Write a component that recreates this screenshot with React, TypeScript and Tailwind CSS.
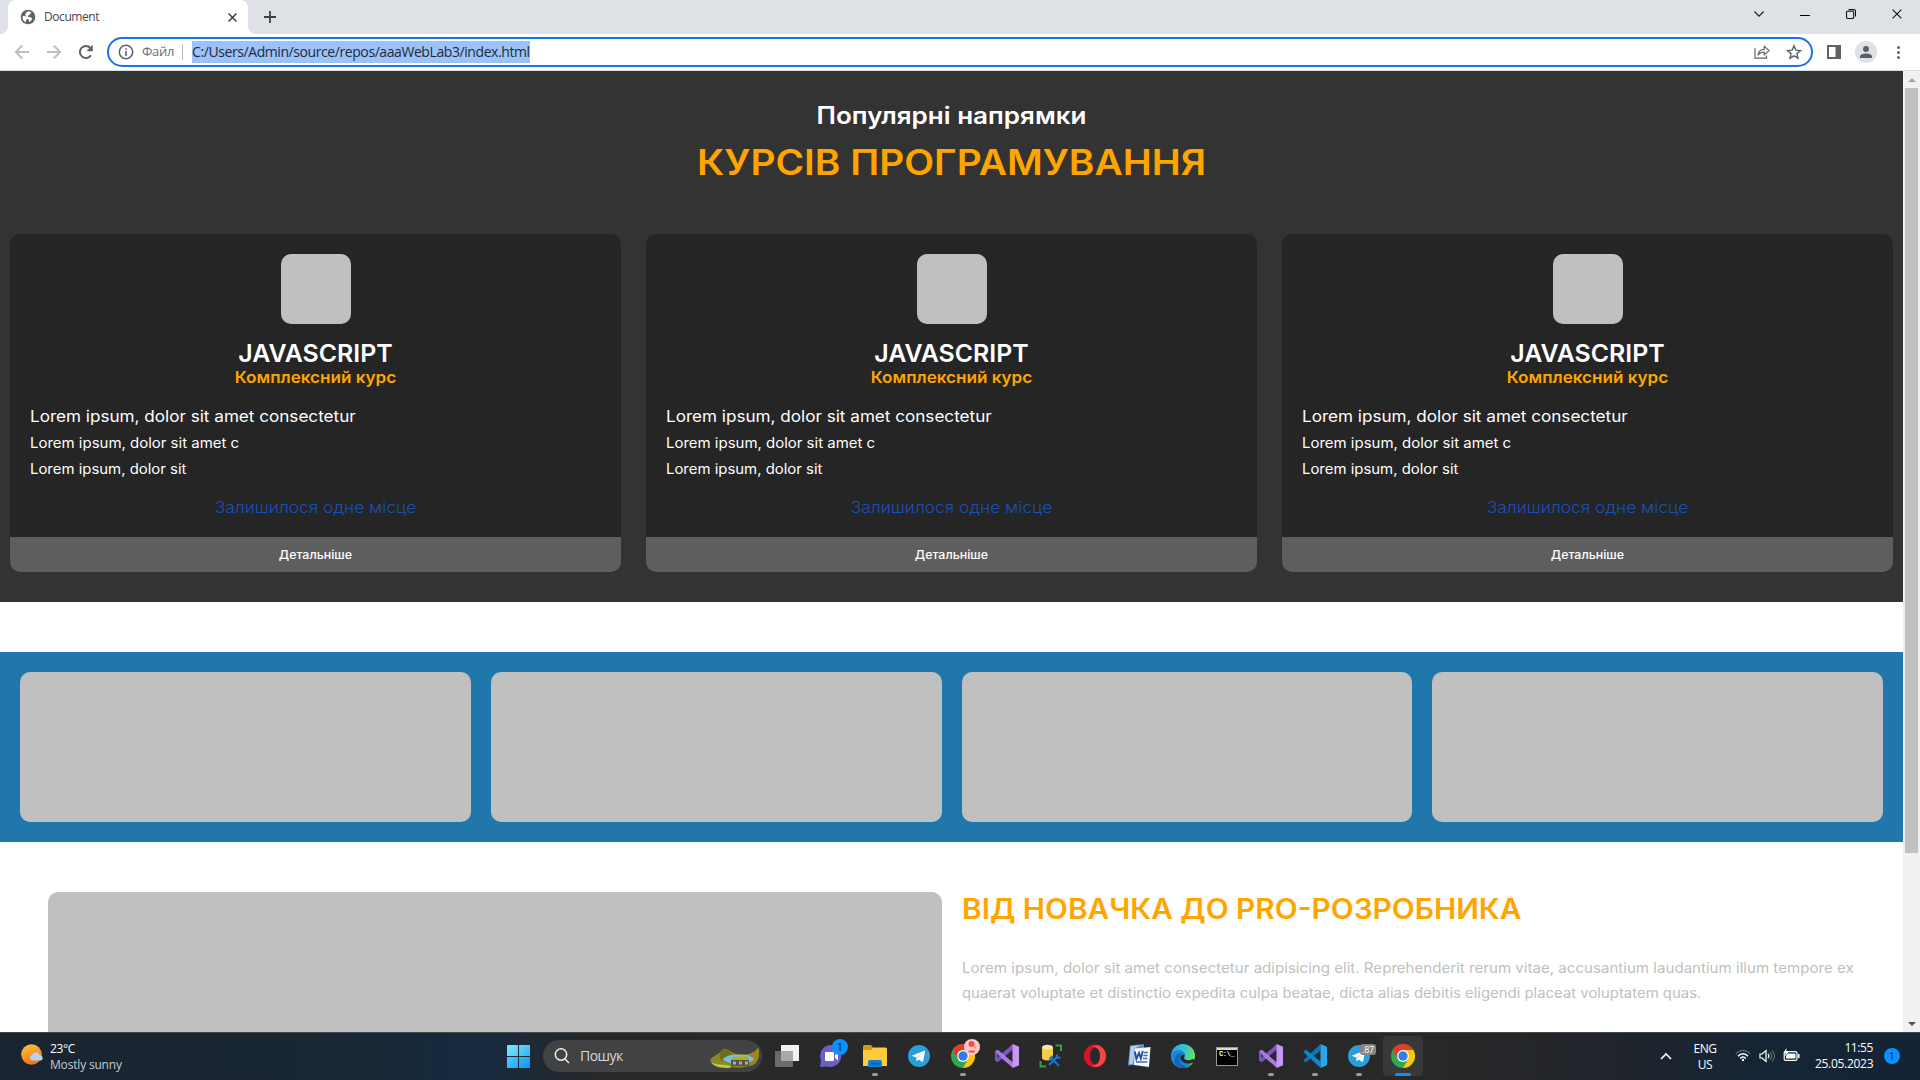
import React from "react";

/* ---------- browser icons ---------- */

const Globe = () => (
  <svg width="16" height="16" viewBox="0 0 16 16">
    <circle cx="8" cy="8" r="7.3" fill="#5f6368" />
    <path d="M2.600 7.200C4 6.800 5 7.600 6.600 8.200 8 8.800 7.600 10 6.600 10.600 5.800 11 6.400 12.200 5.600 13.200 3.600 12.200 2.200 10 2.600 7.200ZM7.400 2.600c1.600-.5 3 0 4 .9-.2 1-1.400 1-1.600 1.800-.3 1.200-1.500.7-2 1.600-.5.8.6 1.200 1.800 1.100 1.600-.1 1.400 1.300 2.600 1.300-.4 2.200-1.800 3.300-3.300 3.900.5-1.300-.2-1.900-.5-2.700-.4-1-2.200-.8-2.600-2.100-.4-1.200.3-1.800-.5-2.500C5.400 5.500 5.400 4.200 7.400 2.600Z" fill="#fff" />
  </svg>
);

const Cross = ({ size, color, w }: { size: number; color: string; w: number }) => (
  <svg width={size} height={size} viewBox="0 0 10 10" stroke={color} strokeWidth={w} fill="none">
    <path d="M.6.6 9.400 9.400M9.400.6.6 9.400" />
  </svg>
);

const Arrow = ({ flip }: { flip?: boolean }) => (
  <svg width="16" height="16" viewBox="0 0 16 16" className={flip ? "rotate-180" : ""} fill="none" stroke="#bcbec0" strokeWidth="1.9">
    <path d="M15 8H2.500M8.300 1.500 1.800 8l6.500 6.500" />
  </svg>
);

const Reload = () => (
  <svg width="16" height="16" viewBox="0 0 16 16">
    <path d="M13 11.200A6 6 0 1 1 12.400 4" fill="none" stroke="#5f6368" strokeWidth="2" />
    <path d="M14.800.8v6.400H8.400Z" fill="#5f6368" />
  </svg>
);

const Info = () => (
  <svg width="16" height="16" viewBox="0 0 16 16">
    <circle cx="8" cy="8" r="6.700" fill="none" stroke="#5f6368" strokeWidth="1.500" />
    <path d="M7.200 7h1.600v5H7.200zM7.200 4.200h1.600v1.600H7.200z" fill="#5f6368" />
  </svg>
);

const Share = () => (
  <svg width="16" height="16" viewBox="0 0 16 16" fill="none" stroke="#5f6368" strokeWidth="1.200">
    <path d="M1 4.200v10h11.500v-2.600" />
    <path d="M4 11c.4-3.600 2.500-5.600 6.200-5.700V2.300l4.900 4.300-4.900 4.300V8C7.400 8 5.600 9 4 11Z" strokeLinejoin="round" />
  </svg>
);

const Star = () => (
  <svg width="16" height="16" viewBox="0 0 16 16" fill="none" stroke="#5f6368" strokeWidth="1.400">
    <path d="m8 1.800 1.800 4.300 4.700.4-3.600 3.100 1.100 4.600L8 11.800l-4 2.400 1.100-4.600-3.600-3.100 4.700-.4Z" />
  </svg>
);

/* ---------- taskbar icons ---------- */

const Chrome = () => (
  <svg width="24" height="24" viewBox="0 0 24 24">
    <circle cx="12" cy="12" r="12" fill="#2da94f" />
    <path d="M12 24A12 12 0 0 0 22.400 6H12l5.200 9Z" fill="#fdc60b" />
    <path d="M1.600 6A12 12 0 0 1 22.400 6H12A6 6 0 0 0 6.800 15Z" fill="#e33b2e" />
    <circle cx="12" cy="12" r="5.900" fill="#fff" />
    <circle cx="12" cy="12" r="4.700" fill="#2f7de9" />
  </svg>
);

const VisualStudio = () => (
  <svg width="24" height="24" viewBox="0 0 24 24">
    <path d="M0 7.200v9.600l2.800 1.400L18 5.500V0L6.300 10 2.600 14V10L0 7.200Z" fill="#7d53bd" />
    <path d="M0 7.200 2.800 5.800 18 18.500V24L6.300 14 2.600 10Z" fill="#a77be2" />
    <path d="M17.500 0 24 2.800v18.400L17.500 24Z" fill="#c596f5" />
  </svg>
);

const VSCode = () => (
  <svg width="24" height="24" viewBox="0 0 24 24">
    <path d="M.5 16.200 17.500 0v6.500L3 18.300.5 17Z" fill="#0c76bd" />
    <path d="M.5 7.500 3 5.700 17.500 17.500V24L.5 8Z" fill="#0c86cf" />
    <path d="M17.500 0 24 2.800v18.400L17.500 24Z" fill="#29a5ee" />
  </svg>
);

const Telegram = () => (
  <svg width="22" height="22" viewBox="0 0 22 22">
    <circle cx="11" cy="11" r="11" fill="#2a9fd8" />
    <path d="M3.800 10.700 16.300 5.700c.6-.2 1 .1.8.9l-2 9.600c-.1.700-.6.8-1.200.5l-3.100-2.300-1.600 1.500c-.4.300-.7.100-.7-.3l-.3-3Z" fill="#fff" />
    <path d="m8.200 12.600 6-4.300-4.800 5.300-.9 2.300Z" fill="#b9d9ec" />
  </svg>
);

const TaskView = () => (
  <svg width="24" height="22" viewBox="0 0 24 22">
    <rect x="6" width="18" height="16" fill="#f1f1f1" />
    <rect y="6" width="18" height="16" fill="#6b6b6b" />
    <rect x="6" y="6" width="12" height="10" fill="#a9a9a9" />
  </svg>
);

const Chat = () => (
  <svg width="24" height="24" viewBox="0 0 24 24">
    <path d="M12 1a11 11 0 1 1-4 21.500L1 23l1-6.500A11 11 0 0 1 12 1Z" fill="#6a5fc8" />
    <rect x="6" y="8" width="9" height="9" rx="1" fill="#fff" />
    <path d="m16 11 3-2.500v8L16 14Z" fill="#fff" />
  </svg>
);

const Folder = () => (
  <svg width="24" height="22" viewBox="0 0 24 22">
    <path d="M0 1.500A1.500 1.500 0 0 1 1.500 0H8l2 2.500V8H0Z" fill="#d9980f" />
    <path d="M0 5h8l2.500-2.500h12A1.500 1.500 0 0 1 24 4v17H0Z" fill="#fdcb3c" />
    <path d="M5 22v-5a2 2 0 0 1 2-2h10a2 2 0 0 1 2 2v5Z" fill="#127cce" />
    <path d="M8 18h8v1.500H8z" fill="#0a5ba4" />
  </svg>
);

const Ssms = () => (
  <svg width="24" height="24" viewBox="0 0 24 24">
    <path d="M16.500 1.500h5.500V7M1.500 17v5.500H7" fill="none" stroke="#3f9b45" strokeWidth="2" />
    <path d="M3 3v11c0 1.500 2.500 2.500 5.500 2.500S14 15.500 14 14V3Z" fill="#f6c94a" />
    <ellipse cx="8.500" cy="3.200" rx="5.500" ry="2.400" fill="#fbe9b0" />
    <path d="m10 21 9-9M12 13.500l8 8.500" stroke="#1e72c4" strokeWidth="2.200" />
    <path d="M18 10.500v3.200h3.500M10.500 15.500l3-3.500" stroke="#1e72c4" strokeWidth="2" fill="none" />
  </svg>
);

const Opera = () => (
  <svg width="24" height="24" viewBox="0 0 24 24">
    <ellipse cx="12" cy="12" rx="11.200" ry="11.400" fill="#d9122b" />
    <path d="M15 1.200A11.300 11.300 0 0 1 15 22.800 9 9 0 0 1 8.500 21c6 1 8-4 8-9s-2-10-8-9A9 9 0 0 1 15 1.200Z" fill="#f3474a" />
    <ellipse cx="12" cy="12" rx="5" ry="8.600" fill="#2a2a2a" />
  </svg>
);

const Word = () => (
  <svg width="24" height="24" viewBox="0 0 24 24">
    <path d="M3 1.500 17 0v20L1 21.500Z" fill="#5f8bcd" />
    <path d="M3.500 2.200 14 1 8 4 6 19.500l-4 1Z" fill="#b9cdea" />
    <path d="M8 4.500 23.500 3 22 23 7 21Z" fill="#f7f9fd" />
    <path d="m7.800 7.500 1.600 7.500L12 9l1.800 5.500 2-7.500" fill="none" stroke="#1f4fa0" strokeWidth="1.900" />
    <path d="M16.800 8.500h4M16.300 11.500h4.300M16 14.500h4.300M9 18h11.300" stroke="#3f6cb5" strokeWidth="1.300" />
  </svg>
);

const Edge = () => (
  <svg width="24" height="24" viewBox="0 0 24 24">
    <defs>
      <linearGradient id="edgeTop" x1="0" y1="0" x2="1" y2=".4">
        <stop offset="0" stopColor="#2aa7e6" />
        <stop offset=".55" stopColor="#35c1d8" />
        <stop offset="1" stopColor="#6be05a" />
      </linearGradient>
    </defs>
    <circle cx="12" cy="12" r="12" fill="url(#edgeTop)" />
    <path d="M.2 11C1 7 5 5.500 8.500 6c4 .6 6.200 3.500 5.500 6-.4 1.300-1 1.500-.7 2.500.6 1.600 3.500 2.600 8.700.8C20.500 20.500 16.500 24 12 24 5 24-.5 18 .2 11Z" fill="#1b86dc" />
    <path d="M8.500 12.500c-1.500 5 2.500 9.500 7.800 10.600C9 26 2.500 21 3.500 15.500 4.200 11.500 8 9 11.500 9c-1.500.8-2.500 2-3 3.500Z" fill="#1565b8" />
    <path d="M13.700 11c.5 1.300-1 2-.5 3.500.7 1.900 4.800 2.700 9 .6l2 1.900-1.200 1.300C17 21 10 19 9.300 14c-.2-2 1.500-4 4.400-3Z" fill="#2a2a2a" />
  </svg>
);

const Cmd = () => (
  <div className="flex h-[19px] w-[22px] flex-col border border-[#9a9a9a] bg-black">
    <div className="h-0.5 bg-[#d8d8d8]" />
    <div className="pl-0.5 font-['Liberation_Mono'] text-[7px] leading-[8px] font-bold tracking-[-0.4px] text-white">C:\_</div>
  </div>
);

const Landscape = () => (
  <svg width="50" height="21" viewBox="0 0 50 21">
    <path d="M0 14C1 9 9 8 12 3c4-4 8 3 15 4 8 1 15 1 21-6 2 6 1 12-3 16-8 5-34 5-45-3Z" fill="#8a8a28" />
    <path d="M12 3c4-3 8 3 11 4-4 3-9 3-11 7-3-1-3-8 0-11Z" fill="#6f6a1c" />
    <path d="M48 .5c2 6 1 12-3 15l-7-3c-1-4 6-4 10-12Z" fill="#a2831f" />
    <path d="M13 12c3-4 11-5 18-4 6-1 11 1 13 4-2 5-24 8-31 0Z" fill="#6fc3e6" />
    <path d="M1 15c8 4 14 2 20 4l-1 2C11 21 3 20 1 15Z" fill="#c3c83a" />
    <path d="m23 10 14-1 3 4H20Z" fill="#b7ac24" />
    <path d="M21 13h18v6H21z" fill="#55544c" />
    <path d="M23 14.500h3v3h-3zM29 14.500h3v3h-3zM35 14.500h3v3h-3z" fill="#a9a8b8" />
  </svg>
);

const Weather = () => (
  <svg width="24" height="22" viewBox="0 0 24 22">
    <defs>
      <linearGradient id="sun" x1=".2" y1="0" x2=".6" y2="1">
        <stop offset="0" stopColor="#fbc23a" />
        <stop offset="1" stopColor="#f0701a" />
      </linearGradient>
    </defs>
    <circle cx="10.500" cy="10.500" r="10.300" fill="url(#sun)" />
    <path d="M11 16.500a3 3 0 0 1 .3-5.800 4 4 0 0 1 7.500.6A2.700 2.700 0 0 1 20 16.500Z" fill="#b9d1f7" />
  </svg>
);

/* ---------- taskbar ---------- */

type Task = { id: string; icon: React.ReactNode; running?: boolean; active?: boolean; badge?: React.ReactNode };

const tasks: Task[] = [
  { id: "view", icon: <TaskView /> },
  {
    id: "chat",
    icon: <Chat />,
    badge: (
      <div className="absolute top-1.5 left-[23px] flex size-4 items-center justify-center rounded-full bg-[#0a90ff] font-['Open_Sans'] text-[11px] text-[#10283e]">1</div>
    ),
  },
  { id: "files", icon: <Folder />, running: true },
  { id: "telegram", icon: <Telegram /> },
  {
    id: "chrome-profile",
    icon: <Chrome />,
    running: true,
    badge: (
      <svg className="absolute top-1.5 left-[23px]" width="16" height="16" viewBox="0 0 16 16">
        <circle cx="8" cy="8" r="8" fill="#fbc9cc" />
        <circle cx="7.500" cy="5" r="3" fill="#ef4b54" />
        <path d="m9.500 6 3.500 3.500-2.500.3Z" fill="#f08a3c" />
        <rect x="4.500" y="11.500" width="6.500" height="2" rx="1" fill="#ef4b54" />
      </svg>
    ),
  },
  { id: "vs", icon: <VisualStudio /> },
  { id: "ssms", icon: <Ssms /> },
  { id: "opera", icon: <Opera /> },
  { id: "word", icon: <Word /> },
  { id: "edge", icon: <Edge /> },
  { id: "cmd", icon: <Cmd /> },
  { id: "vs-open", icon: <VisualStudio />, running: true },
  { id: "vscode", icon: <VSCode />, running: true },
  {
    id: "telegram-open",
    icon: <Telegram />,
    running: true,
    badge: (
      <div className="absolute top-[11px] left-[23px] flex h-[11px] w-4 items-center justify-center rounded-[3px] bg-[#858585] font-['Open_Sans'] text-[9px] tracking-[-0.3px] text-white">.87</div>
    ),
  },
  { id: "chrome", icon: <Chrome />, running: true, active: true },
];

const Taskbar = () => (
  <footer className="flex h-12 shrink-0 border-t border-[#45484b] bg-[linear-gradient(90deg,#1a2430_0%,#182733_18%,#162a40_25%,#272829_31%,#292929_50%,#282828_75%,#20242b_84%,#152535_92%,#142434_100%)] font-['Open_Sans',sans-serif] text-xs text-white">
    <div className="flex w-[507px] gap-[5px] pt-[11px] pl-[21px]">
      <Weather />
      <div className="-mt-[3px]">
        <div className="h-4 leading-4 tracking-[-0.4px]">23°C</div>
        <div className="h-4 leading-4 tracking-[-0.18px] text-[#c5cad0]">Mostly sunny</div>
      </div>
    </div>
    <div className="mt-3 grid size-[23px] grid-cols-2 gap-px">
      <div className="rounded-tl-[1px] bg-linear-to-br from-[#7deafc] to-[#4ecbfa]" />
      <div className="bg-linear-to-br from-[#5ed6fb] to-[#2fb4f8]" />
      <div className="bg-linear-to-br from-[#4dcdfa] to-[#24a8f6]" />
      <div className="bg-linear-to-br from-[#36b8f9] to-[#1191f2]" />
    </div>
    <div className="mt-[7px] ml-[13px] flex h-8 w-[219px] items-center rounded-full bg-[#414243] pr-0.5 pl-[11px]">
      <svg width="16" height="16" viewBox="0 0 16 16" fill="none" stroke="#f0f0f0" strokeWidth="1.500">
        <circle cx="7" cy="6.500" r="5.700" />
        <path d="m11 11 4 4" />
      </svg>
      <span className="pl-[10px] text-sm tracking-[-0.55px] text-[#d8d8d8]">Пошук</span>
      <div className="mt-0.5 ml-auto">
        <Landscape />
      </div>
    </div>
    <div className="ml-[3px] flex">
      {tasks.map((t) => (
        <div key={t.id} className="relative flex h-[47px] w-11 flex-col items-center pt-[3px]">
          <div className={t.active ? "flex h-10 w-10 items-center justify-center rounded bg-[#383838]" : "flex h-10 w-10 items-center justify-center"}>
            {t.icon}
          </div>
          {t.badge}
          {t.running && (
            <div className={t.active ? "z-10 -mt-[3px] h-[3px] w-4 rounded-full bg-[#0a90ff]" : "-mt-[3px] h-[3px] w-1.5 rounded-full bg-[#9a9a9a]"} />
          )}
        </div>
      ))}
    </div>
    <div className="flex flex-1 items-start justify-end pr-5">
      <svg className="mt-[19px]" width="12" height="8" viewBox="0 0 12 8" fill="none" stroke="#fff" strokeWidth="1.600">
        <path d="m1 7 5-5 5 5" />
      </svg>
      <div className="mt-[8px] ml-[21px] w-[24px] text-center leading-4 tracking-[-0.5px]">
        <div>ENG</div>
        <div>US</div>
      </div>
      <svg className="mt-4 ml-[18px]" width="16" height="13" viewBox="0 0 16 13" fill="none" stroke="#fff" strokeWidth="1.500">
        <path d="M.8 5C4.500.3 11.500.3 15.200 5" stroke="#59636e" />
        <path d="M3 7.200c2.800-3.300 7.200-3.300 10 0M5.200 9.400c1.600-1.800 4-1.800 5.600 0" />
        <circle cx="8" cy="11" r="1.200" fill="#fff" stroke="none" />
      </svg>
      <svg className="mt-4 ml-2" width="16" height="14" viewBox="0 0 16 14" fill="none" stroke="#fff" strokeWidth="1.200">
        <path d="M1 5h2.200L7 1.500v11L3.200 9H1Z" />
        <path d="M9 4.800c1 1.300 1 3.100 0 4.400" />
        <path d="M11 3c2 2.400 2 5.600 0 8M13 1.200c3 3.600 3 8 0 11.600" stroke="#59636e" />
      </svg>
      <svg className="mt-[15px] ml-2" width="17" height="14" viewBox="0 0 17 14">
        <rect x="1.200" y="3.600" width="12.800" height="8.800" rx="1.500" fill="none" stroke="#fff" strokeWidth="1.200" />
        <path d="M4.500 5.500h8v5H3V8ZM15 6h1.500v4H15zM3.500 0 .5 5h2L1.800 8.500 5.500 3.800H3.300Z" fill="#fff" />
      </svg>
      <div className="mt-[7px] ml-[15px] w-[58px] text-right leading-4">
        <div className="tracking-[-0.4px]">11:55</div>
        <div className="tracking-[-0.3px]">25.05.2023</div>
      </div>
      <div className="mt-[15px] ml-[11px] flex size-4 items-center justify-center rounded-full bg-[#0a90ff] text-[11px] text-[#10283e]">1</div>
    </div>
  </footer>
);

/* ---------- browser chrome ---------- */

const BrowserBar = () => (
  <header className="flex h-[71px] shrink-0 flex-col border-b border-[#dadce0] bg-white font-['Open_Sans',sans-serif]">
    <div className="flex h-[34px] items-stretch bg-[#dee1e6]">
      <div className="flex w-2 items-end bg-white">
        <div className="h-full w-2 rounded-br-lg bg-[#dee1e6]" />
      </div>
      <div className="flex w-60 items-center rounded-t-lg bg-white pr-[11px] pl-3">
        <Globe />
        <span className="ml-2 text-xs tracking-[-0.42px] text-[#45494d]">Document</span>
        <div className="ml-auto">
          <Cross size={9} color="#3c4043" w={1.7} />
        </div>
      </div>
      <div className="bg-white">
        <div className="h-full w-2 rounded-bl-lg bg-[#dee1e6]" />
      </div>
      <div className="flex items-center pl-2">
        <svg width="12" height="12" viewBox="0 0 12 12" stroke="#3c4043" strokeWidth="1.800">
          <path d="M6 0v12M0 6h12" />
        </svg>
      </div>
      <div className="ml-auto flex items-center gap-9 pr-[18px] pb-[6px]">
        <svg width="10" height="6" viewBox="0 0 10 6" fill="none" stroke="#222" strokeWidth="1.200">
          <path d="m.4.5 4.600 4.600L9.600.5" />
        </svg>
        <div className="mt-[2px] h-px w-[10px] bg-black" />
        <svg width="10" height="10" viewBox="0 0 10 10" fill="none" stroke="#111" strokeWidth="1.100">
          <rect x=".5" y="2.300" width="7.200" height="7.200" rx="1.300" />
          <path d="M2.500.6H8A1.500 1.500 0 0 1 9.500 2v5.500" />
        </svg>
        <Cross size={10} color="#111" w={1.1} />
      </div>
    </div>
    <div className="flex flex-1 items-center pl-[14px]">
      <Arrow />
      <div className="ml-4 flex">
        <Arrow flip />
      </div>
      <div className="ml-4 flex">
        <Reload />
      </div>
      <div className="ml-[13px] flex h-[30px] w-[1706px] items-center rounded-full border-2 border-[#1a73e8] bg-white pr-[9px] pl-[9px]">
        <Info />
        <span className="ml-2 text-[13px] tracking-[-0.3px] text-[#6a6e73]">Файл</span>
        <div className="ml-2 h-4 w-px bg-[#b4b7bb]" />
        <span className="ml-[9px] h-[22px] bg-[#9cc2f7] text-sm leading-[22px] tracking-[-0.42px] text-[#202b3a]">C:/Users/Admin/source/repos/aaaWebLab3/index.html</span>
        <div className="ml-auto flex gap-4">
          <Share />
          <Star />
        </div>
      </div>
      <svg className="ml-[14px]" width="14" height="14" viewBox="0 0 14 14">
        <path d="M0 0h14v14H0zM2 2v10h6.500V2Z" fill="#5f6368" fillRule="evenodd" />
      </svg>
      <div className="ml-[14px] flex size-[22px] items-center justify-center rounded-full bg-[#dee1e6]">
        <svg width="12" height="12" viewBox="0 0 12 12" fill="#55606f">
          <circle cx="6" cy="3" r="3" />
          <path d="M0 12v-1.500C0 8.500 3 7.500 6 7.500s6 1 6 3V12Z" />
        </svg>
      </div>
      <div className="ml-5 flex flex-col gap-[2px]">
        <div className="size-[3px] rounded-full bg-[#5f6368]" />
        <div className="size-[3px] rounded-full bg-[#5f6368]" />
        <div className="size-[3px] rounded-full bg-[#5f6368]" />
      </div>
    </div>
  </header>
);

const Scrollbar = () => (
  <div className="flex w-[17px] flex-col items-center bg-[#f1f1f1]">
    <div className="flex h-[17px] items-center justify-center">
      <svg width="8" height="4" viewBox="0 0 8 4">
        <path d="M0 4 4 0l4 4Z" fill="#a3a3a3" />
      </svg>
    </div>
    <div className="h-[765px] w-[13px] bg-[#c1c1c1]" />
    <div className="mt-auto flex h-[17px] items-center justify-center">
      <svg width="8" height="4" viewBox="0 0 8 4">
        <path d="m0 0 4 4 4-4Z" fill="#505050" />
      </svg>
    </div>
  </div>
);

/* ---------- page ---------- */

const CourseCard = () => (
  <article className="flex h-[338px] flex-col overflow-hidden rounded-[10px] bg-[#252525] text-white">
    <div className="flex flex-1 flex-col px-5 pt-5">
      <div className="size-[70px] self-center rounded-[10px] bg-[#c0c0c0]" />
      <h3 className="mt-[15px] h-[29px] scale-x-[1.037] text-center text-2xl leading-[29px] font-semibold">JAVASCRIPT</h3>
      <h4 className="h-[18px] scale-x-[1.068] text-center text-base leading-[18px] font-semibold text-[#ffa500]">Комплексний курс</h4>
      <p className="mt-5 h-5 origin-left scale-x-[1.069] text-base leading-5">Lorem ipsum, dolor sit amet consectetur</p>
      <p className="mt-2 h-[18px] origin-left scale-x-[1.069] text-sm leading-[18px]">Lorem ipsum, dolor sit amet c</p>
      <p className="mt-2 h-[18px] origin-left scale-x-[1.065] text-sm leading-[18px]">Lorem ipsum, dolor sit</p>
      <p className="mt-[19px] h-5 scale-x-[1.085] text-center text-base leading-5 font-light text-[#1b50b4]">Залишилося одне місце</p>
    </div>
    <div className="h-[35px] bg-[#5e5e5e] text-center text-xs leading-[35px] font-medium">
      <span className="inline-block scale-x-[1.035]">Детальніше</span>
    </div>
  </article>
);

const Page = () => (
  <main className="h-full flex-1 overflow-hidden bg-white font-['Inter',sans-serif]">
    <section className="h-[531px] bg-[#333333] px-2.5 pt-[30px]">
      <h2 className="h-[30px] scale-x-[1.085] text-center text-2xl leading-[30px] font-semibold text-white">Популярні напрямки</h2>
      <h1 className="mt-[9px] h-[44px] scale-x-[1.11] text-center text-[35px] leading-[44px] font-semibold text-[#ffa500]">КУРСІВ ПРОГРАМУВАННЯ</h1>
      <div className="mt-[50px] grid grid-cols-3 gap-[25px]">
        <CourseCard />
        <CourseCard />
        <CourseCard />
      </div>
    </section>
    <section className="mt-[50px] grid h-[190px] grid-cols-4 gap-5 bg-[#2077ab] p-5">
      {[0, 1, 2, 3].map((i) => (
        <div key={i} className="rounded-[10px] bg-[#c0c0c0]" />
      ))}
    </section>
    <section className="mt-[50px] flex gap-5 pl-12">
      <div className="h-[300px] w-[894px] shrink-0 rounded-[10px] bg-[#c0c0c0]" />
      <div className="whitespace-nowrap">
        <h2 className="h-[34px] origin-left scale-x-[1.064] text-[28px] leading-[34px] font-semibold text-[#ffa500]">ВІД НОВАЧКА ДО PRO-РОЗРОБНИКА</h2>
        <p className="mt-[29px] text-sm leading-[25px] text-[#c0c0c0]">
          <span className="block origin-left scale-x-[1.078]">Lorem ipsum, dolor sit amet consectetur adipisicing elit. Reprehenderit rerum vitae, accusantium laudantium illum tempore ex</span>
          <span className="block origin-left scale-x-[1.064]">quaerat voluptate et distinctio expedita culpa beatae, dicta alias debitis eligendi placeat voluptatem quas.</span>
        </p>
      </div>
    </section>
  </main>
);

export default function App() {
  return (
    <div className="flex h-[1080px] w-[1920px] flex-col overflow-hidden">
      <BrowserBar />
      <div className="flex h-[961px] shrink-0 overflow-hidden">
        <Page />
        <Scrollbar />
      </div>
      <Taskbar />
    </div>
  );
}
